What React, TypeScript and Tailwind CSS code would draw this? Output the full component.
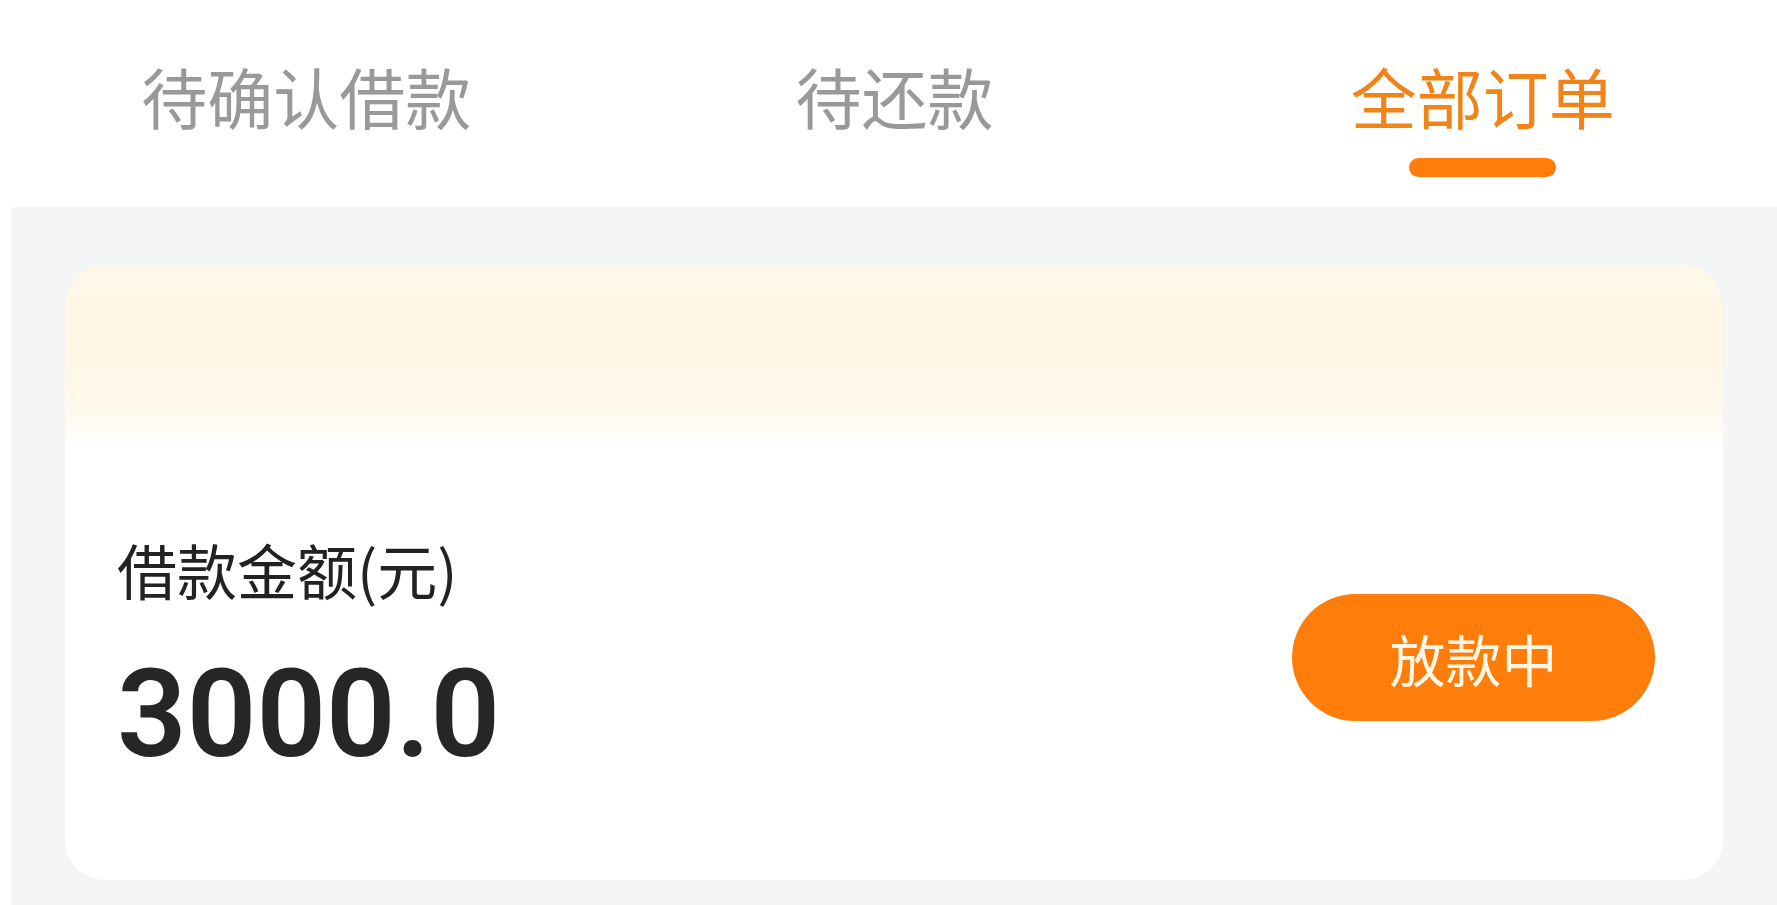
import React from 'react';

const CJK = "font-['Noto_Sans_CJK_SC','Noto_Sans',sans-serif]";

const tabs = [
  { label: '待确认借款', active: false },
  { label: '待还款', active: false },
  { label: '全部订单', active: true },
];

function TabBar() {
  return (
    <div className="grid grid-cols-3 pl-[12px] h-[207px] bg-white">
      {tabs.map((t) => (
        <div key={t.label} className="flex flex-col items-center pt-[62px]">
          <span
            className={`${CJK} text-[66px] leading-none ${t.active ? 'text-[#f08418]' : 'text-[#999999]'}`}
          >
            {t.label}
          </span>
          {t.active && <div className="mt-[30px] w-[147px] h-[19px] rounded-full bg-[#ff7d0a]" />}
        </div>
      ))}
    </div>
  );
}

function OrderCard() {
  return (
    <div className="h-[615px] rounded-[40px] bg-white bg-[linear-gradient(to_bottom,#fff7e8_0%,#fff6e4_14%,#fff9ee_24%,#ffffff_30%)] pt-[274px] pl-[52px] pr-[68px]">
      <div className="flex items-center justify-between">
        <div className="flex flex-col">
          <span className={`${CJK} text-[60px] leading-none text-[#222222]`}>借款金额(元)</span>
          <span className="mt-[55px] font-['Roboto',sans-serif] font-semibold text-[122px] leading-none text-[#262626]">
            3000.0
          </span>
        </div>
        <button className="w-[363px] h-[127px] rounded-full bg-[#ff7d0a] flex items-center justify-center">
          <span className={`${CJK} text-[56px] leading-none text-[#fff7e6]`}>放款中</span>
        </button>
      </div>
    </div>
  );
}

export default function App() {
  return (
    <div className="w-full h-[905px] bg-white overflow-hidden">
      <TabBar />
      <div className="ml-[11px] bg-[#f4f5f7] pt-[58px] pb-[25px] px-[54px]">
        <OrderCard />
      </div>
    </div>
  );
}
